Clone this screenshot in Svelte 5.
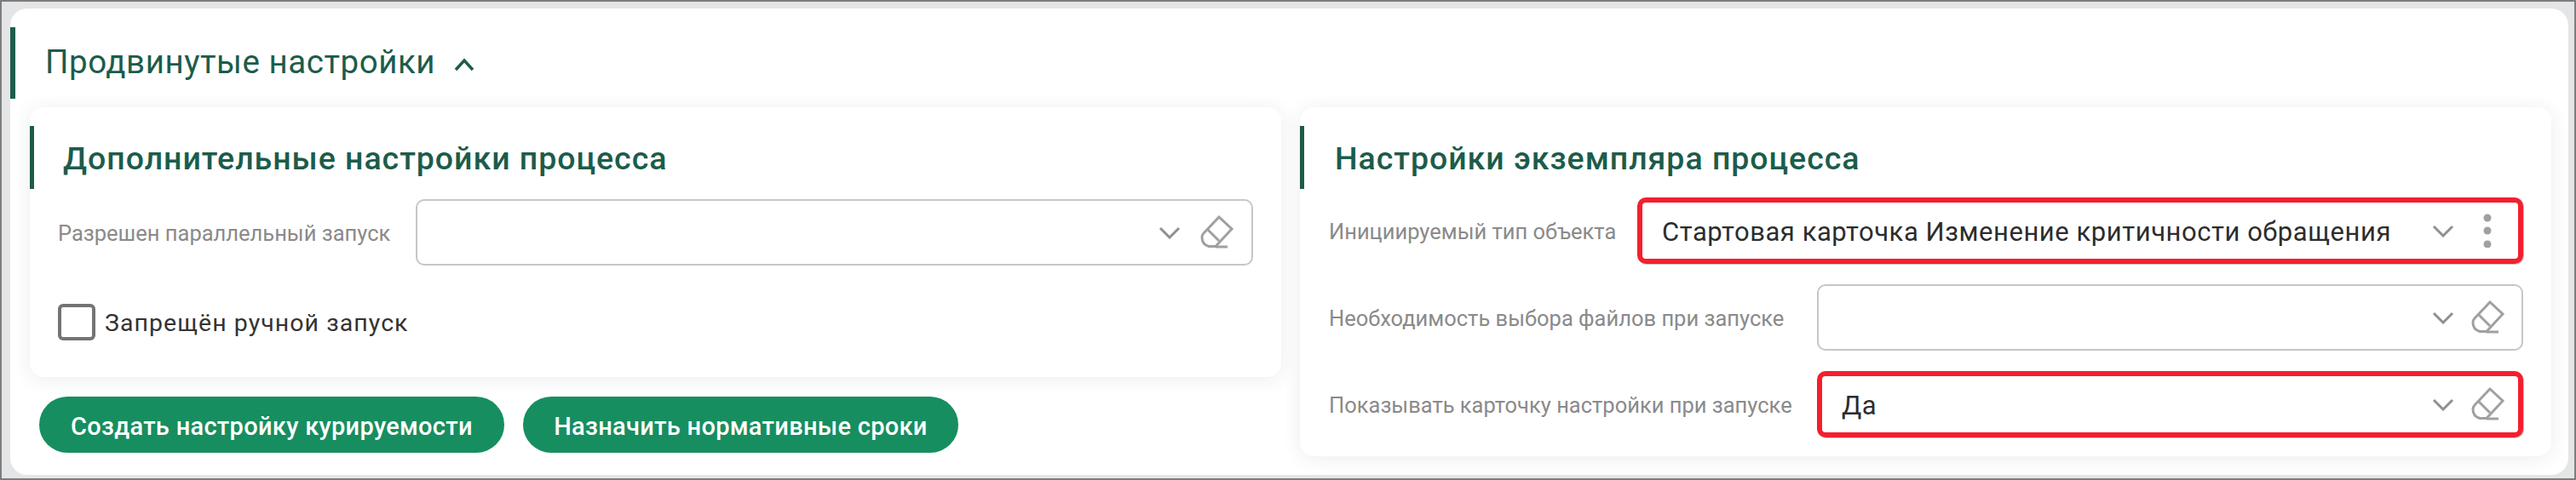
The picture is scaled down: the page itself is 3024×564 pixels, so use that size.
<script>
  const fields = [
    { label: "Инициируемый тип объекта", value: "Стартовая карточка Изменение критичности обращения", wide: true, marked: true, menu: true },
    { label: "Необходимость выбора файлов при запуске", value: "", wide: false, marked: false, menu: false },
    { label: "Показывать карточку настройки при запуске", value: "Да", wide: false, marked: true, menu: false }
  ];
</script>

{#snippet controls(menu)}
  <svg class="chevron" viewBox="0 0 26 15" aria-hidden="true">
    <path d="M2 2 L13 13 L24 2" />
  </svg>
  {#if menu}
    <svg class="icon" viewBox="0 0 40 40" aria-hidden="true">
      <circle cx="20" cy="5" r="4.5" />
      <circle cx="20" cy="20" r="4.5" />
      <circle cx="20" cy="36" r="4.5" />
    </svg>
  {:else}
    <svg class="icon eraser" viewBox="0 0 40 40" aria-hidden="true">
      <path d="M23 2 L38 16 L19 36.5 H11 Q3 34 3 26 Q3 23 5 21 Z" />
      <path d="M9 16 L23 30" />
      <path d="M19 37 H33" />
    </svg>
  {/if}
{/snippet}

<div class="page">
  <section class="outer">
    <header class="section-head">
      <h2>Продвинутые настройки</h2>
      <svg class="toggle" viewBox="0 0 24 16" aria-hidden="true">
        <path d="M2 14 L12 3 L22 14" />
      </svg>
    </header>

    <div class="columns">
      <div class="column">
        <div class="card">
          <h3 class="card-head">Дополнительные настройки процесса</h3>
          <div class="row first-left">
            <span class="label left">Разрешен параллельный запуск</span>
            <div class="select">
              <span class="value"></span>
              {@render controls(false)}
            </div>
          </div>
          <label class="check">
            <span class="box"></span>
            <span class="check-text">Запрещён ручной запуск</span>
          </label>
        </div>
        <div class="actions">
          <button class="one">Создать настройку курируемости</button>
          <button class="two">Назначить нормативные сроки</button>
        </div>
      </div>

      <div class="column">
        <div class="card tall">
          <h3 class="card-head right">Настройки экземпляра процесса</h3>
          <div class="rows">
            {#each fields as f}
              <div class="row">
                <span class="label" class:wide={f.wide}>{f.label}</span>
                <div class="select" class:marked={f.marked}>
                  <span class="value">{f.value}</span>
                  {@render controls(f.menu)}
                </div>
              </div>
            {/each}
          </div>
        </div>
      </div>
    </div>
  </section>
</div>

<style>
  :global(body) {
    margin: 0;
    background: #e4e5e6;
  }

  .page {
    box-sizing: border-box;
    width: 3024px;
    height: 564px;
    padding: 8px 7px 4px 10px;
    border: 2px solid #7d7d7d;
    background: #e4e5e6;
    font-family: Roboto, "Noto Sans", sans-serif;
    overflow: hidden;
  }

  .outer {
    height: 548px;
    box-sizing: border-box;
    padding-top: 22px;
    background: #fff;
    border-radius: 20px;
  }

  .section-head {
    display: flex;
    align-items: center;
    height: 84px;
    border-left: 6px solid #1c5c4b;
    padding-left: 35px;
    box-sizing: border-box;
    margin-bottom: 10px;
    color: #1c5c4b;
  }

  h2 {
    margin: 0 0 2px;
    font-size: 38.5px;
    font-weight: 400;
    letter-spacing: 0.55px;
    line-height: 1;
  }

  .toggle {
    width: 24px;
    height: 16px;
    margin-left: 22px;
    margin-top: 4px;
  }

  .toggle path {
    fill: none;
    stroke: #1c5c4b;
    stroke-width: 3.5;
  }

  .columns {
    display: flex;
    gap: 22px;
    padding: 0 20px 0 23px;
  }

  .column {
    flex: 1 1 0;
    min-width: 0;
  }

  .card {
    box-sizing: border-box;
    height: 317px;
    padding-top: 22px;
    background: #fff;
    border-radius: 16px;
    box-shadow: 0 2px 22px rgba(30, 40, 60, 0.09);
  }

  .card.tall {
    height: 410px;
  }

  .card-head {
    box-sizing: border-box;
    display: flex;
    align-items: center;
    height: 74px;
    margin: 0;
    padding: 2px 0 0 34px;
    border-left: 5px solid #1c5c4b;
    color: #1c5c4b;
    font-size: 37.5px;
    font-weight: 500;
    letter-spacing: 0.97px;
  }

  .card-head.right {
    padding-left: 36px;
  }

  .rows {
    display: flex;
    flex-direction: column;
    gap: 24px;
    margin-top: 10px;
    padding: 0 33px 0 34px;
  }

  .row {
    display: flex;
    align-items: center;
  }

  .first-left {
    margin-top: 12px;
    padding: 0 33px 0 33px;
  }

  .first-left .select {
    padding-right: 21px;
  }

  .first-left .chevron {
    margin-right: 22px;
  }

  .label {
    flex: 0 0 573px;
    padding-top: 2px;
    color: #8a8a8a;
    font-size: 25.5px;
    white-space: nowrap;
  }

  .label.left {
    flex-basis: 420px;
  }

  .label.wide {
    flex-basis: 362px;
  }

  .select {
    flex: 1;
    box-sizing: border-box;
    display: flex;
    align-items: center;
    height: 78px;
    padding: 0 20px 0 27px;
    border: 2px solid #c6c6c6;
    border-radius: 10px;
    background: #fff;
  }

  .select.marked {
    border: 6px solid #f41f2e;
    padding: 0 16px 0 23px;
    box-shadow: 1px 1px 0 #c6c6c6;
  }

  .value {
    flex: 1;
    padding-top: 2px;
    color: #2d2d2d;
    font-size: 31px;
    letter-spacing: 0.55px;
    white-space: nowrap;
  }

  .chevron {
    width: 26px;
    height: 15px;
    margin-right: 19px;
  }

  .chevron path {
    fill: none;
    stroke: #909090;
    stroke-width: 3;
  }

  .icon {
    width: 40px;
    height: 40px;
  }

  .icon circle {
    fill: #a0a0a0;
  }

  .eraser path {
    fill: none;
    stroke: #a0a0a0;
    stroke-width: 3;
  }

  .check {
    display: flex;
    align-items: center;
    gap: 11px;
    margin: 45px 0 0 33px;
    color: #333;
    font-size: 28.5px;
    letter-spacing: 1.05px;
  }

  .check-text {
    padding-top: 2px;
  }

  .box {
    box-sizing: border-box;
    width: 44px;
    height: 43px;
    border: 4px solid #747474;
    border-radius: 6px;
  }

  .actions {
    display: flex;
    gap: 22px;
    margin: 23px 0 0 11px;
  }

  button {
    box-sizing: border-box;
    height: 66px;
    padding: 3px 0 0;
    border: none;
    border-radius: 33px;
    background: #178e60;
    color: #fff;
    font-family: inherit;
    font-size: 29px;
    font-weight: 500;
    letter-spacing: 0.3px;
    white-space: nowrap;
  }

  button.one {
    width: 546px;
  }

  button.two {
    width: 511px;
  }
</style>
